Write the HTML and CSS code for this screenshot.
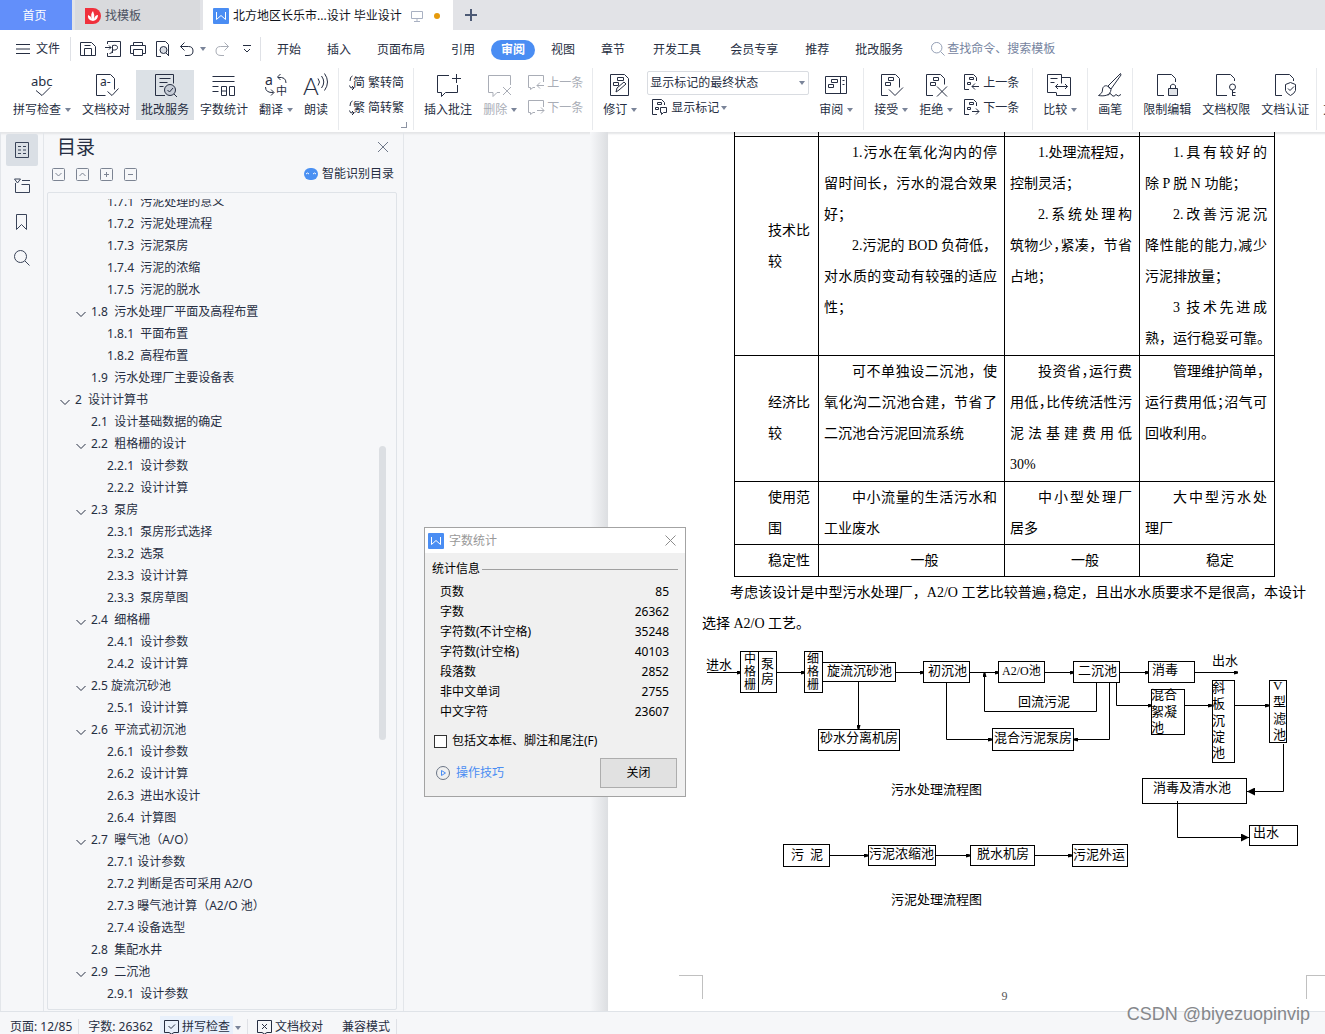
FILE: index.html
```html
<!DOCTYPE html>
<html lang="zh-CN">
<head>
<meta charset="utf-8">
<title>北方地区长乐市…设计 毕业设计</title>
<link rel="stylesheet" href="styles.css">
</head>
<body>
<svg class="sprite" aria-hidden="true">
  <symbol id="chev" viewBox="0 0 10 10"><path d="M.5 3 5 7.500 9.500 3"/></symbol>
  <symbol id="w" viewBox="0 0 16 16"><rect width="16" height="16" rx="1" fill="#4a8df3" stroke="none"/><path d="M3.500 4v7.500l4.500-4 4.500 4V4" stroke="#fff"/></symbol>
  <symbol id="review" viewBox="0 0 28 26"><path d="M14 23.500H4.500v-21h18v9M8.500 6.500h11M8.500 10.500h8M8.500 14.500h4"/><circle cx="19" cy="18" r="5.500" fill="#c6ccd6"/><path d="m16.500 18 2 2 3.500-4M23 22l3 3"/></symbol>
  <symbol id="count" viewBox="0 0 28 26"><path d="M2.500 4.500h22M2.500 9.500h22M2.500 14.500h6M2.500 19.500h6M11.500 14.500h5v9h-5zM19.500 14.500h5v9h-5zM11.500 19h5"/></symbol>
  <symbol id="note" viewBox="0 0 28 26"><path d="M15 3.500H3.500v17h4v4l4-4h12V13M18 6.500h9M22.500 2v9"/></symbol>
  <symbol id="notedel" viewBox="0 0 28 26"><path d="M14 20.500h-3l-4 4v-4H2.500v-17h22V13M17 15l8 8M25 15l-8 8"/></symbol>
  <symbol id="edit" viewBox="0 0 28 26"><path d="M4.500 2.500h14l4 4v17h-18zM11.500 5.500h6v3h-6zM7.500 10.500h5v3h-5zM10 20l1-4 7-6 2 2-7 6z"/></symbol>
  <symbol id="pane" viewBox="0 0 28 26"><path d="M3.500 4.500h21v17h-21zM18.500 4.500v17M9.500 7.500h6v3h-6zM6.500 12.500h5v3h-5zM20.500 8.500h2M20.500 12.500h2"/></symbol>
  <symbol id="accept" viewBox="0 0 28 26"><path d="M11 23.500H4.500v-21h14l4 4v9M11.500 5.500h5v3h-5zM8.500 10.500h5v3h-5zM12 17.500l6 6 8-8"/></symbol>
  <symbol id="reject" viewBox="0 0 28 26"><path d="M11 23.500H4.500v-21h14l4 4v6M11.500 5.500h5v3h-5zM8.500 10.500h5v3h-5zM15 14.500l10 10M25 14.500l-10 10"/></symbol>
  <symbol id="compare" viewBox="0 0 28 26"><path d="M10 20.500H1.500v-18h14v9M15.500 5.500h9v18h-14v-3M4.500 6.500h7M4.500 10.500h4M9.500 14.500h12M12 12l-2.500 2.500L12 17M19 12l2.500 2.500L19 17"/></symbol>
  <symbol id="brush" viewBox="0 0 28 26"><path d="M24.500 1.500 12 14l3 3L25 3zM11.500 14c-3-1-5 1-5 4s-2 4-4 5.500c6 1 12 0 12.500-6zM12 23.500q2-4 4 0 2 2 4-1 2 3 5 0"/></symbol>
  <symbol id="lock" viewBox="0 0 28 26"><path d="M11 23.500H4.500v-21h14l4 4V10M17.500 16.500v-3q2.500-3 5 0v3"/><path d="M15.500 16.500h9v7h-9z" fill="#dfe2e7"/></symbol>
  <symbol id="key" viewBox="0 0 28 26"><path d="M15 23.500H4.500v-21h14l4 4V9M20.500 18v6M20.500 20.500h3M20.500 23.500h3"/><circle cx="20.500" cy="15" r="3"/></symbol>
  <symbol id="shield" viewBox="0 0 28 26"><path d="M11 23.500H4.500v-21h14l4 4V9M14.500 12.500l5-2 5 2v6q-1 3-5 5-4-2-5-5zM17 16.500l2 2 4-4"/></symbol>
  <symbol id="prevnote" viewBox="0 0 17 17"><path d="M7 13.500H5l-2.500 2v-2H.5V1.500h15V8M16 11.500H9M12 8.500l-3 3 3 3"/></symbol>
  <symbol id="nextnote" viewBox="0 0 17 17"><path d="M7 13.500H5l-2.500 2v-2H.5V1.500h15V8M9 11.500h7M13 8.500l3 3-3 3"/></symbol>
  <symbol id="prev" viewBox="0 0 17 17"><path d="M5 15.500H.5V.5h9l3 3V7M5.500 3.500h4v2h-4zM3.500 8.500h3v2h-3zM15 12.500H8M11 9.500l-3 3 3 3"/></symbol>
  <symbol id="next" viewBox="0 0 17 17"><path d="M5 15.500H.5V.5h9l3 3V7M5.500 3.500h4v2h-4zM3.500 8.500h3v2h-3zM8 12.500h7M12 9.500l3 3-3 3"/></symbol>
  <symbol id="marks" viewBox="0 0 17 17"><path d="M5 15.500H.5V.5h9l3 3V6M5.500 3.500h4v2h-4zM3.500 8.500h3v2h-3zM8.500 8.500h6v5h-3l-2 2v-2h-1z"/></symbol>
  <symbol id="find" viewBox="0 0 16 16"><circle cx="6.500" cy="6.500" r="6"/><path d="m11 11 4.500 4.500"/></symbol>
</svg>

<nav class="tabs" aria-label="文档标签">
  <button class="tab home">首页</button>
  <button class="tab tpl"><svg width="16" height="16" viewBox="0 0 16 16"><path d="M0 0h8a8 8 0 0 1 0 16H0z" fill="#f0303c" stroke="none"/><path d="M8 13Q2 12 3 7q3 1 4 4Q5 6 8 3q2 4 1 8 1-4 4-4 0 5-5 6z" fill="#fff" stroke="none"/></svg>找模板</button>
  <button class="tab doc"><svg width="16" height="16"><use href="#w"/></svg><span>北方地区长乐市...设计 毕业设计</span><svg class="mon" width="12" height="12" viewBox="0 0 12 12"><path d="M.5 1.500h11v7H.5zM6 8.500v3M3 11.500h6"/></svg><i class="dot"></i></button>
  <button class="tab plus" aria-label="新建"><svg width="12" height="12" viewBox="0 0 12 12"><path d="M6 0v12M0 6h12" stroke-width="2"/></svg></button>
</nav>

<header class="menu">
  <button class="file"><svg width="14" height="10" viewBox="0 0 14 10"><path d="M0 .5h14M0 5h14M0 9.500h14"/></svg>文件</button>
  <i class="vline"></i>
  <div class="quick">
    <button aria-label="保存"><svg width="16" height="16" viewBox="0 0 16 16"><path d="M.5 1.500h11l4 4v9H.5zM4.500 14V7.500h7V14M4.500 4.500h6"/></svg></button>
    <button aria-label="输出PDF"><svg width="16" height="16" viewBox="0 0 16 16"><path d="M2.500 3V.5h13v15h-13V12M0 6.500h6M4 4.500l2 2-2 2M7.500 12V4.500q5-1 5 2t-5 2.500M4.500 12.500q3 0 3-3"/></svg></button>
    <button aria-label="打印"><svg width="16" height="16" viewBox="0 0 16 16"><path d="M3.500 4V1.500h9V4M3.500 12.500h-3v-8h15v8h-3M3.500 8.500h9v6h-9z"/></svg></button>
    <button aria-label="打印预览"><svg width="16" height="16" viewBox="0 0 16 16"><path d="M6 15.500H1.500V.5h9l3 3V14"/><circle cx="8.500" cy="9" r="3.500" fill="#d8dce3"/><path d="m11 12 3 3"/></svg></button>
    <button aria-label="撤销"><svg width="14" height="14" viewBox="0 0 14 14"><path d="M4.500.5l-4 4 4 4M.5 4.500h8q4.500 0 4.500 4.500T8 13.500H5"/></svg></button>
    <i class="caret"></i>
    <button class="off" aria-label="恢复"><svg width="14" height="14" viewBox="0 0 14 14"><path d="M9.500.5l4 4-4 4M13.500 4.500h-8Q1 4.500 1 9t5 4.500h3"/></svg></button>
    <button class="more" aria-label="更多"><svg width="8" height="8" viewBox="0 0 8 8"><path d="M0 .5h8M1 4l3 3 3-3"/></svg></button>
  </div>
  <i class="vline"></i>
  <nav class="items" aria-label="菜单">
    <button>开始</button><button>插入</button><button>页面布局</button><button>引用</button><button class="on">审阅</button><button>视图</button><button>章节</button><button class="wide">开发工具</button><button class="wide">会员专享</button><button>推荐</button><button>批改服务</button>
  </nav>
  <label class="search"><svg width="14" height="14"><use href="#find"/></svg><input type="text" placeholder="查找命令、搜索模板" aria-label="查找命令、搜索模板"></label>
</header>

<div class="ribbon">
  <div class="group">
    <button class="big"><svg viewBox="0 0 28 26"><text x="3" y="14" font-size="13">abc</text><path d="m8 18.500 6 5 8-8"/></svg><span>拼写检查<i class="caret"></i></span></button>
    <button class="big"><svg viewBox="0 0 28 26"><path d="M4.500 2.500h14l4 4v11M4.500 2.500v21h9M15.500 19.500l4.500 4 6.500-7"/><text x="8" y="14" font-size="12">a-</text></svg><span>文档校对</span></button>
    <button class="big sel"><svg><use href="#review"/></svg><span>批改服务</span></button>
    <button class="big"><svg><use href="#count"/></svg><span>字数统计</span></button>
    <button class="big"><svg viewBox="0 0 28 26"><text x="3" y="13" font-size="14">a</text><text x="14" y="23" font-size="11">中</text><path d="M18.500 2l-3 3 3 3M16 5.500q8-1 8 5.500M3.500 15q0 6 8 5.500M9 17.500l3 3-3 3"/></svg><span>翻译<i class="caret"></i></span></button>
    <button class="big"><svg viewBox="0 0 28 26"><text class="thin" x="1" y="23" font-size="24">A</text><path d="M16 6.500q3 3.500 0 7M19.500 4q4.500 6 0 12M22.500 1.500q6 8.500 0 17"/></svg><span>朗读</span></button>
  </div>
  <div class="group launch">
    <div class="stack">
      <button><svg viewBox="0 0 17 17"><path d="M3.500 2Q1 2.500 1 7M.500 11.500q0 3 4 2.500M3 12l2 2-2 2"/><text x="4" y="13" font-size="12">简</text></svg>繁转简</button>
      <button><svg viewBox="0 0 17 17"><path d="M3.500 2Q1 2.500 1 7M.500 11.500q0 3 4 2.500M3 12l2 2-2 2"/><text x="4" y="13" font-size="12">繁</text></svg>简转繁</button>
    </div>
  </div>
  <div class="group">
    <button class="big"><svg><use href="#note"/></svg><span>插入批注</span></button>
    <button class="big off" disabled><svg><use href="#notedel"/></svg><span>删除<i class="caret"></i></span></button>
    <div class="stack off">
      <button disabled><svg><use href="#prevnote"/></svg>上一条</button>
      <button disabled><svg><use href="#nextnote"/></svg>下一条</button>
    </div>
  </div>
  <div class="group">
    <button class="big"><svg><use href="#edit"/></svg><span>修订<i class="caret"></i></span></button>
    <div class="stack pick">
      <div class="drop"><select aria-label="修订显示状态"><option>显示标记的最终状态</option></select><i class="caret"></i></div>
      <button><svg><use href="#marks"/></svg>显示标记<i class="caret"></i></button>
    </div>
    <button class="big"><svg><use href="#pane"/></svg><span>审阅<i class="caret"></i></span></button>
  </div>
  <div class="group roomy">
    <button class="big"><svg><use href="#accept"/></svg><span>接受<i class="caret"></i></span></button>
    <button class="big"><svg><use href="#reject"/></svg><span>拒绝<i class="caret"></i></span></button>
    <div class="stack">
      <button><svg><use href="#prev"/></svg>上一条</button>
      <button><svg><use href="#next"/></svg>下一条</button>
    </div>
  </div>
  <div class="group">
    <button class="big"><svg><use href="#compare"/></svg><span>比较<i class="caret"></i></span></button>
  </div>
  <div class="group">
    <button class="big"><svg><use href="#brush"/></svg><span>画笔</span></button>
  </div>
  <div class="group guard">
    <button class="big"><svg><use href="#lock"/></svg><span>限制编辑</span></button>
    <button class="big"><svg><use href="#key"/></svg><span>文档权限</span></button>
    <button class="big"><svg><use href="#shield"/></svg><span>文档认证</span></button>
  </div>
  <div class="group final">
    <button class="big"><svg><use href="#accept"/></svg><span>文档定稿</span></button>
  </div>
</div>

<main class="work">
  <nav class="rail" aria-label="侧栏">
    <button class="on" aria-label="目录"><svg width="16" height="16" viewBox="0 0 16 16"><path d="M1.500.5h13v15h-13zM4 4.500h3M9 4.500h3M4 8h3M9 8h3M4 11.500h3M9 11.500h3"/></svg></button>
    <button aria-label="导航"><svg width="16" height="16" viewBox="0 0 16 16"><path d="M.5 1h6l-3 4zM8 2.500h8M1.500 5v9.500h14v-8h-8"/></svg></button>
    <button aria-label="书签"><svg width="16" height="16" viewBox="0 0 16 16"><path d="M2.500.5h10v15l-5-5-5 5z"/></svg></button>
    <button aria-label="查找"><svg width="16" height="16"><use href="#find"/></svg></button>
  </nav>
  <aside class="outline">
    <div class="head"><h2>目录</h2><button aria-label="关闭目录"><svg width="10" height="10" viewBox="0 0 10 10"><path d="m0 0 10 10M10 0 0 10"/></svg></button></div>
    <div class="tools">
      <button aria-label="展开"><svg width="13" height="13" viewBox="0 0 13 13"><rect x=".5" y=".5" width="12" height="12" rx="1"/><path d="m3.500 5 3 3 3-3"/></svg></button>
      <button aria-label="收起"><svg width="13" height="13" viewBox="0 0 13 13"><rect x=".5" y=".5" width="12" height="12" rx="1"/><path d="m3.500 8 3-3 3 3"/></svg></button>
      <button aria-label="增加"><svg width="13" height="13" viewBox="0 0 13 13"><rect x=".5" y=".5" width="12" height="12" rx="1"/><path d="M4 6.500h5M6.500 4v5"/></svg></button>
      <button aria-label="减少"><svg width="13" height="13" viewBox="0 0 13 13"><rect x=".5" y=".5" width="12" height="12" rx="1"/><path d="M4 6.500h5"/></svg></button>
      <button class="smart"><svg width="14" height="12" viewBox="0 0 14 12"><rect width="14" height="12" rx="6" fill="#4a90f2" stroke="none"/><path d="M2 6q1.500-2 3 0M9 6q1.500-2 3 0" stroke="#fff"/></svg>智能识别目录</button>
    </div>
    <div class="box">
      <ul class="tree">
        <li class="l3">1.7.1  污泥处理的意义</li>
        <li class="l3">1.7.2  污泥处理流程</li>
        <li class="l3">1.7.3  污泥泵房</li>
        <li class="l3">1.7.4  污泥的浓缩</li>
        <li class="l3">1.7.5  污泥的脱水</li>
        <li class="l2"><svg><use href="#chev"/></svg>1.8  污水处理厂平面及高程布置</li>
        <li class="l3">1.8.1  平面布置</li>
        <li class="l3">1.8.2  高程布置</li>
        <li class="l2">1.9  污水处理厂主要设备表</li>
        <li class="l1"><svg><use href="#chev"/></svg>2  设计计算书</li>
        <li class="l2">2.1  设计基础数据的确定</li>
        <li class="l2"><svg><use href="#chev"/></svg>2.2  粗格栅的设计</li>
        <li class="l3">2.2.1  设计参数</li>
        <li class="l3">2.2.2  设计计算</li>
        <li class="l2"><svg><use href="#chev"/></svg>2.3  泵房</li>
        <li class="l3">2.3.1  泵房形式选择</li>
        <li class="l3">2.3.2  选泵</li>
        <li class="l3">2.3.3  设计计算</li>
        <li class="l3">2.3.3  泵房草图</li>
        <li class="l2"><svg><use href="#chev"/></svg>2.4  细格栅</li>
        <li class="l3">2.4.1  设计参数</li>
        <li class="l3">2.4.2  设计计算</li>
        <li class="l2"><svg><use href="#chev"/></svg>2.5 旋流沉砂池</li>
        <li class="l3">2.5.1  设计计算</li>
        <li class="l2"><svg><use href="#chev"/></svg>2.6  平流式初沉池</li>
        <li class="l3">2.6.1  设计参数</li>
        <li class="l3">2.6.2  设计计算</li>
        <li class="l3">2.6.3  进出水设计</li>
        <li class="l3">2.6.4  计算图</li>
        <li class="l2"><svg><use href="#chev"/></svg>2.7  曝气池（A/O）</li>
        <li class="l3">2.7.1 设计参数</li>
        <li class="l3">2.7.2 判断是否可采用 A2/O</li>
        <li class="l3">2.7.3 曝气池计算（A2/O 池）</li>
        <li class="l3">2.7.4 设备选型</li>
        <li class="l2">2.8  集配水井</li>
        <li class="l2"><svg><use href="#chev"/></svg>2.9  二沉池</li>
        <li class="l3">2.9.1  设计参数</li>
      </ul>
      <i class="thumb"></i>
    </div>
  </aside>

  <div class="canvas">
    <article class="page">
      <table class="cmp">
        <colgroup><col class="c1"><col class="c2"><col class="c3"><col class="c3"></colgroup>
        <tbody>
        <tr class="cut"><td></td><td></td><td></td><td></td></tr>
        <tr class="tall">
          <th scope="row">技术比<br>较</th>
          <td><p class="in j">1.污水在氧化沟内的停</p><p class="j">留时间长，污水的混合效果</p><p>好；</p><p class="in j">2.污泥的 BOD 负荷低，</p><p class="j">对水质的变动有较强的适应</p><p>性；</p></td>
          <td><p class="in j">1.处理流程短，</p><p>控制灵活；</p><p class="in j">2.系统处理构</p><p class="j">筑物少<span class="half">，</span>紧凑，节省</p><p>占地；</p></td>
          <td><p class="in j">1.具有较好的</p><p>除 P 脱 N 功能；</p><p class="in j">2.改善污泥沉</p><p class="j">降性能的能力,减少</p><p>污泥排放量；</p><p class="in j">3 技术先进成</p><p class="j">熟，运行稳妥可靠。</p></td>
        </tr>
        <tr class="mid4">
          <th scope="row">经济比<br>较</th>
          <td><p class="in j">可不单独设二沉池，使</p><p class="j">氧化沟二沉池合建，节省了</p><p>二沉池合污泥回流系统</p></td>
          <td><p class="in j">投资省<span class="half">，</span>运行费</p><p class="j">用低<span class="half">，</span>比传统活性污</p><p class="j">泥法基建费用低</p><p>30%</p></td>
          <td><p class="in j">管理维护简单，</p><p class="j">运行费用低<span class="half">；</span>沼气可</p><p>回收利用。</p></td>
        </tr>
        <tr>
          <th scope="row">使用范<br>围</th>
          <td><p class="in j">中小流量的生活污水和</p><p>工业废水</p></td>
          <td><p class="in j">中小型处理厂</p><p>居多</p></td>
          <td><p class="in j">大中型污水处</p><p>理厂</p></td>
        </tr>
        <tr><th scope="row">稳定性</th><td class="mid">一般</td><td class="mid">一般</td><td class="mid">稳定</td></tr>
        </tbody>
      </table>
      <p class="in j">考虑该设计是中型污水处理厂，A2/O 工艺比较普遍<span class="half">，</span>稳定，且出水水质要求不是很高，本设计</p>
      <p>选择 A2/O 工艺。</p>
      <svg class="flow" viewBox="702 639 604 299" width="604" height="299" role="img" aria-label="污水处理流程图与污泥处理流程图">
        <defs>
          <marker id="ar" viewBox="0 0 4 4" refX="4" refY="2" markerWidth="4" markerHeight="4" orient="auto" markerUnits="userSpaceOnUse"><path d="M0 0 4 1v2L0 4z"/></marker>
          <marker id="ar2" viewBox="0 0 8 8" refX="8" refY="4" markerWidth="8" markerHeight="8" orient="auto" markerUnits="userSpaceOnUse"><path d="M0 0 8 4 0 8z"/></marker>
        </defs>
        <g class="nodes">
          <rect x="740.500" y="651.500" width="18" height="41"/><rect x="758.500" y="651.500" width="18" height="41"/><rect x="804.500" y="651.500" width="18" height="41"/>
          <rect x="822.500" y="662.500" width="73" height="19"/><rect x="818.500" y="729.500" width="81" height="21"/><rect x="923.500" y="661.500" width="46" height="21"/>
          <rect x="998.500" y="661.500" width="46" height="21"/><rect x="1073.500" y="661.500" width="46" height="21"/><rect x="1148.500" y="661.500" width="46" height="21"/>
          <rect x="992.500" y="728.500" width="81" height="22"/><rect x="1151.500" y="689.500" width="33" height="45"/><rect x="1212.500" y="680.500" width="22" height="82"/>
          <rect x="1269.500" y="680.500" width="17" height="62"/><rect x="1142.500" y="778.500" width="104" height="25"/><rect x="1249.500" y="825.500" width="48" height="20"/>
          <rect x="783.500" y="844.500" width="46" height="22"/><rect x="868.500" y="845.500" width="67" height="20"/><rect x="970.500" y="845.500" width="64" height="20"/><rect x="1072.500" y="844.500" width="55" height="22"/>
        </g>
        <g class="lines">
          <path d="M707 672.500h34"/><path d="M777 672.500h28"/><path d="M896 672.500h28"/><path d="M970 672.500h29"/><path d="M1045 672.500h29"/><path d="M1120 672.500h29"/><path d="M1195 672.500h43"/>
          <path d="M858.500 682v47"/><path d="M946.500 683v56.500H992"/><path d="M1096.500 683v28.500h-112V673"/><path d="M1109.500 683v56.500H1074"/><path d="M1116.500 683v22.500h35"/>
          <path d="M1185 705.500h27"/><path d="M1235 705.500h34"/><path d="M830 855.500h38"/><path d="M936 855.500h34"/><path d="M1035 855.500h37"/>
        </g>
        <g class="lines heavy"><path d="M1283.500 744v47.500H1247"/><path d="M1177.500 801v36.500H1249"/></g>
        <g class="cap">
          <text x="706" y="669">进水</text>
          <g class="tight"><text x="744" y="663">中</text><text x="744" y="676">格</text><text x="744" y="689">栅</text>
          <text x="807" y="663">细</text><text x="807" y="676">格</text><text x="807" y="689">栅</text></g>
          <text x="761" y="668">泵</text><text x="761" y="683">房</text>
          <text x="827" y="675">旋流沉砂池</text><text x="820" y="742">砂水分离机房</text><text x="928" y="675">初沉池</text>
          <text class="tight" x="1002" y="675">A2/O池</text><text x="1078" y="675">二沉池</text><text x="1152" y="674">消毒</text><text x="1212" y="665">出水</text>
          <text x="1018" y="706">回流污泥</text><text x="994" y="742">混合污泥泵房</text>
          <text x="1151" y="699">混合</text><text x="1151" y="716">絮凝</text><text x="1151" y="732">池</text>
          <text x="1212" y="692">斜</text><text x="1212" y="708">板</text><text x="1212" y="725">沉</text><text x="1212" y="741">淀</text><text x="1212" y="757">池</text>
          <text x="1273" y="690">V</text><text x="1273" y="706">型</text><text x="1273" y="723">滤</text><text x="1273" y="739">池</text>
          <text x="1153" y="792">消毒及清水池</text><text x="1253" y="837">出水</text>
          <text x="891" y="794">污水处理流程图</text>
          <text x="791" y="859">污</text><text x="810" y="859">泥</text><text x="869" y="858">污泥浓缩池</text><text x="977" y="858">脱水机房</text><text x="1073" y="859">污泥外运</text>
          <text x="891" y="904">污泥处理流程图</text>
        </g>
      </svg>
      <footer class="foot"><i></i><span>9</span><i></i></footer>
    </article>
  </div>

  <section class="dialog" role="dialog" aria-labelledby="dt">
    <header><svg width="16" height="16"><use href="#w"/></svg><h3 id="dt">字数统计</h3><button aria-label="关闭窗口"><svg width="11" height="11" viewBox="0 0 11 11"><path d="m.5.500 10 10M10.500.500l-10 10"/></svg></button></header>
    <div class="body">
      <h4>统计信息</h4>
      <dl><dt>页数</dt><dd>85</dd><dt>字数</dt><dd>26362</dd><dt>字符数(不计空格)</dt><dd>35248</dd><dt>字符数(计空格)</dt><dd>40103</dd><dt>段落数</dt><dd>2852</dd><dt>非中文单词</dt><dd>2755</dd><dt>中文字符</dt><dd>23607</dd></dl>
      <label class="check"><input type="checkbox">包括文本框、脚注和尾注(F)</label>
      <div class="acts"><a href="#tips"><svg width="14" height="14" viewBox="0 0 14 14"><circle cx="7" cy="7" r="6.500" stroke="#6b7585"/><path d="M5.500 4.500v5l4-2.500z"/></svg>操作技巧</a><button>关闭</button></div>
    </div>
  </section>
</main>

<footer class="status">
  <span>页面: 12/85</span><i></i><span>字数: 26362</span>
  <button class="hot"><svg width="15" height="14" viewBox="0 0 15 14"><path d="M5 12.500H.5v-12h14v12H10L7.500 14zM4.500 6l2.500 2.500L11 4.500"/></svg>拼写检查</button><b class="caret"></b><i></i>
  <button><svg width="15" height="14" viewBox="0 0 15 14"><path d="M5 12.500H.5v-12h14v12H10L7.500 14zM5 4l5 5M10 4 5 9"/></svg>文档校对</button><span class="compat">兼容模式</span><i></i>
</footer>
<div class="mark">CSDN @biyezuopinvip</div>
</body>
</html>
```
FILE: styles.css
```css
* { box-sizing: border-box; margin: 0; padding: 0; }
body {
  height: 100vh; display: flex; flex-direction: column; overflow: hidden; position: relative;
  font: 12px/16px "Noto Sans", "Noto Sans CJK SC", sans-serif; color: #262e42; background: #fff;
}
button, input, select { font: inherit; color: inherit; background: none; border: 0; }
button { display: flex; align-items: center; white-space: nowrap; flex: none; }
svg { fill: none; stroke: currentColor; flex: none; display: block; overflow: visible; }
svg text { fill: currentColor; stroke: none; }
.thin { font-family: Lato, sans-serif; font-weight: 300; }
.sprite { position: absolute; width: 0; height: 0; }
.caret { display: inline-block; flex: none; border: 3px solid transparent; border-top: 4px solid #7a8499; border-bottom: 0; }

/* document tabs */
.tabs { display: flex; flex: none; height: 30px; background: #e2e3e7; }
.tab { height: 30px; padding-top: 1px; }
.home { width: 72px; justify-content: center; padding-right: 3px; background: #628ffa; color: #fff; margin-right: 3px; }
.tpl { width: 125px; padding-left: 10px; gap: 4px; background: #d9dadd; color: #4b5261; margin-right: 3px; }
.doc { width: 250px; padding-left: 10px; gap: 4px; background: #fff; color: #10131a; }
.mon { color: #a9b1c2; margin-left: 5px; }
.dot { width: 6px; height: 6px; border-radius: 3px; background: #e69a0b; margin-left: 7px; }
.plus { padding: 0 12px; color: #4d5a75; }

/* menu line */
.menu { display: flex; flex: none; align-items: center; height: 38px; padding-left: 16px; }
.file { gap: 6px; width: 54px; }
.vline { flex: none; width: 1px; height: 24px; background: #dfe1e6; }
.quick { display: flex; align-items: center; gap: 9px; width: 189px; padding-left: 9px; flex: none; }
.quick .caret { margin-left: -3px; }
.more { margin-left: 5px; }
.off { color: #a9adb6; }
.items { display: flex; gap: 6px; padding: 1px 0 0 6px; }
.items button { height: 20px; padding: 0 10px; }
.items .wide { margin: 0 1px 0 2px; }
.items .on { background: #4a8df3; color: #fff; border-radius: 10px; font-weight: 700; }
.search { display: flex; align-items: center; gap: 2px; margin-left: 18px; color: #8793ab; }
.search input { width: 140px; }
.search input::placeholder { color: #7684a0; }

/* ribbon */
.ribbon { display: flex; flex: none; height: 64px; padding-left: 8px; overflow: hidden; }
.group { display: flex; flex: none; align-items: flex-start; gap: 1px; padding: 2px 5px 0; border-right: 1px solid #e8eaed; position: relative; height: 62px; }
.group:first-child { padding: 2px 5px 0 0; }
.group.roomy { padding-right: 9px; }
.group.guard { padding-right: 2px; }
.group.final { padding-left: 1px; }
.big { flex-direction: column; height: 50px; padding: 2px 5px; gap: 4px; }
.big svg { width: 28px; height: 26px; margin: 0 -4px; }
.big span { display: flex; align-items: center; gap: 4px; }
.big:disabled { color: #a9adb6; }
.sel { background: #dce1e6; }
.stack { padding: 0 4px 0 5px; }
.stack button { height: 25px; gap: 2px; }
.stack svg { width: 17px; height: 17px; }
.stack.off button { color: #a9adb6; }
.launch::after { content: ""; position: absolute; right: 6px; bottom: 2px; width: 5px; height: 5px; border: solid #8c93a3; border-width: 0 1px 1px 0; }
.pick { padding: 0 4px; }
.pick > button { padding-left: 5px; }
.drop { display: grid; align-items: center; width: 162px; height: 25px; }
.drop > * { grid-area: 1 / 1; }
.drop select { appearance: none; height: 24px; width: 100%; padding-left: 2px; border: 1px solid #d9dce1; border-radius: 2px; }
.drop .caret { justify-self: end; margin-right: 4px; }

/* work area */
.work { display: flex; flex: 1; min-height: 0; position: relative; background: #f6f7f9; box-shadow: inset 0 3px 2px -1px #e4e5e7; }
.rail { width: 44px; flex: none; padding: 2px 6px 2px 5px; border: solid #e3e6ea; border-width: 0 1px; display: flex; flex-direction: column; gap: 4px; color: #3a4459; }
.rail button { width: 32px; height: 32px; justify-content: center; border-radius: 2px; }
.rail .on { background: #dadfe5; }
.outline { width: 360px; flex: none; display: flex; flex-direction: column; padding: 0 6px 1px 3px; border-right: 1px solid #e3e6ea; }
.head { display: flex; justify-content: space-between; align-items: center; height: 30px; padding: 0 9px 0 10px; flex: none; color: #6f7889; }
.head h2 { font-size: 19px; line-height: 28px; font-weight: 400; color: #262e42; }
.tools { display: flex; gap: 11px; height: 30px; padding: 0 3px 6px 5px; align-items: center; flex: none; color: #7c8493; }
.smart { margin-left: auto; gap: 4px; color: #262e42; }
.box { flex: 1; min-height: 0; border: 1px solid #dfe3e8; border-radius: 2px; position: relative; padding-top: 6px; display: flex; }
.tree { list-style: none; overflow: hidden; flex: 1; }
.tree li { height: 22px; line-height: 22px; white-space: pre; display: flex; align-items: center; }
.tree li:first-child { margin-top: -8px; }
.tree svg { width: 10px; height: 10px; margin: 3px 5px 0 -15px; }
.l1 { padding-left: 27px; }
.l2 { padding-left: 43px; }
.l3 { padding-left: 59px; }
.thumb { position: absolute; right: 10px; bottom: 33%; height: 36%; width: 7px; border-radius: 4px; background: #dcdfe3; }

/* paper */
.canvas { flex: 1; min-width: 0; overflow: hidden; padding-left: 186px; display: flex; }
.canvas::before { content: ""; flex: none; width: 18px; background: linear-gradient(90deg, #f6f7f9, #dcdee1); }
.page {
  width: 794px; flex: none; padding: 0 96px 0 94px; background: #fff; box-shadow: inset 0 3px 2px -1px #e4e5e7;
  font: 14px/31px "Liberation Serif", "Noto Sans CJK SC", serif; color: #000;
}
.page p { white-space: nowrap; }
.in { text-indent: 28px; }
.j { text-align: justify; text-align-last: justify; }
.half { font-feature-settings: "halt"; }
.cmp { border-collapse: collapse; table-layout: fixed; width: 541px; margin-left: 32px; }
.c1 { width: 84px; }
.c2 { width: 186px; }
.c3 { width: 135px; }
.cmp td, .cmp th { border: 1px solid #000; padding: 0 7px 0 5px; vertical-align: top; font-weight: 400; }
.cmp th { text-align: left; vertical-align: middle; padding: 0 0 0 33px; }
.cmp .cut td { height: 4px; border-top: 0; }
.cmp .tall { height: 219px; }
.cmp .mid4 { height: 126px; }
.cmp .mid { text-align: center; text-indent: 28px; }
.nodes rect, .lines path { stroke: #000; fill: none; }
.lines path { marker-end: url(#ar); }
.heavy path { marker-end: url(#ar2); }
.flow marker path { fill: #000; stroke: none; marker-end: none; }
.cap { font-size: 13px; color: #000; }
.tight { font-size: 12px; }
.foot { display: flex; justify-content: space-between; align-items: flex-start; margin: 37px -24px 0 -23px; font-size: 12px; line-height: 16px; color: #555; }
.foot i { width: 24px; height: 24px; border: solid #c0c0c0; border-width: 1px 1px 0 0; }
.foot i:last-child { border-width: 1px 0 0 1px; }
.foot span { padding-top: 13px; }

/* word count window */
.dialog { position: absolute; left: 424px; top: 395px; width: 262px; border: 1px solid #a3a3a3; background: #f0f0f0; color: #000; }
.dialog header { display: flex; align-items: center; gap: 5px; height: 25px; padding: 0 9px 0 3px; background: #fff; color: #8c8c8c; }
.dialog h3 { font-size: 12px; font-weight: 400; flex: 1; color: #999; }
.body { padding: 8px 7px; }
.dialog h4 { display: flex; align-items: center; gap: 2px; font-size: 12px; font-weight: 400; }
.dialog h4::after { content: ""; flex: 1; height: 1px; background: #a0a0a0; }
.dialog dl { display: grid; grid-template-columns: 1fr auto; line-height: 20px; padding: 5px 9px 0 8px; }
.dialog dd { text-align: right; }
.check { display: flex; align-items: center; gap: 5px; padding: 11px 2px 9px; }
.check input { appearance: none; width: 13px; height: 13px; border: 1px solid #333; background: #fff; }
.acts { display: flex; justify-content: space-between; align-items: center; }
.acts a { display: flex; align-items: center; gap: 6px; padding-left: 4px; color: #4a8df3; text-decoration: none; }
.acts button { width: 77px; height: 30px; justify-content: center; background: #e1e1e1; border: 1px solid #adadad; margin-right: 1px; }

/* status line */
.status { display: flex; flex: none; height: 23px; padding: 4px 0 0 10px; background: #f6f7f9; border-top: 1px solid #dfe3e8; overflow: hidden; align-items: flex-start; line-height: 22px; white-space: nowrap; }
.status button { gap: 3px; height: 22px; }
.status i { width: 1px; height: 16px; margin: 3px 9px 0 6px; background: #dfe1e6; flex: none; }
.status .hot { margin-left: 7px; padding: 0 3px 0 4px; background: #e8f0fb; }
.status .caret { margin: 10px 0 0 2px; }
.compat { margin-left: 19px; }
.mark { position: absolute; right: 15px; bottom: 8px; font: 18px/24px "Liberation Sans", "Noto Sans CJK SC", sans-serif; color: #85878b; }
```
